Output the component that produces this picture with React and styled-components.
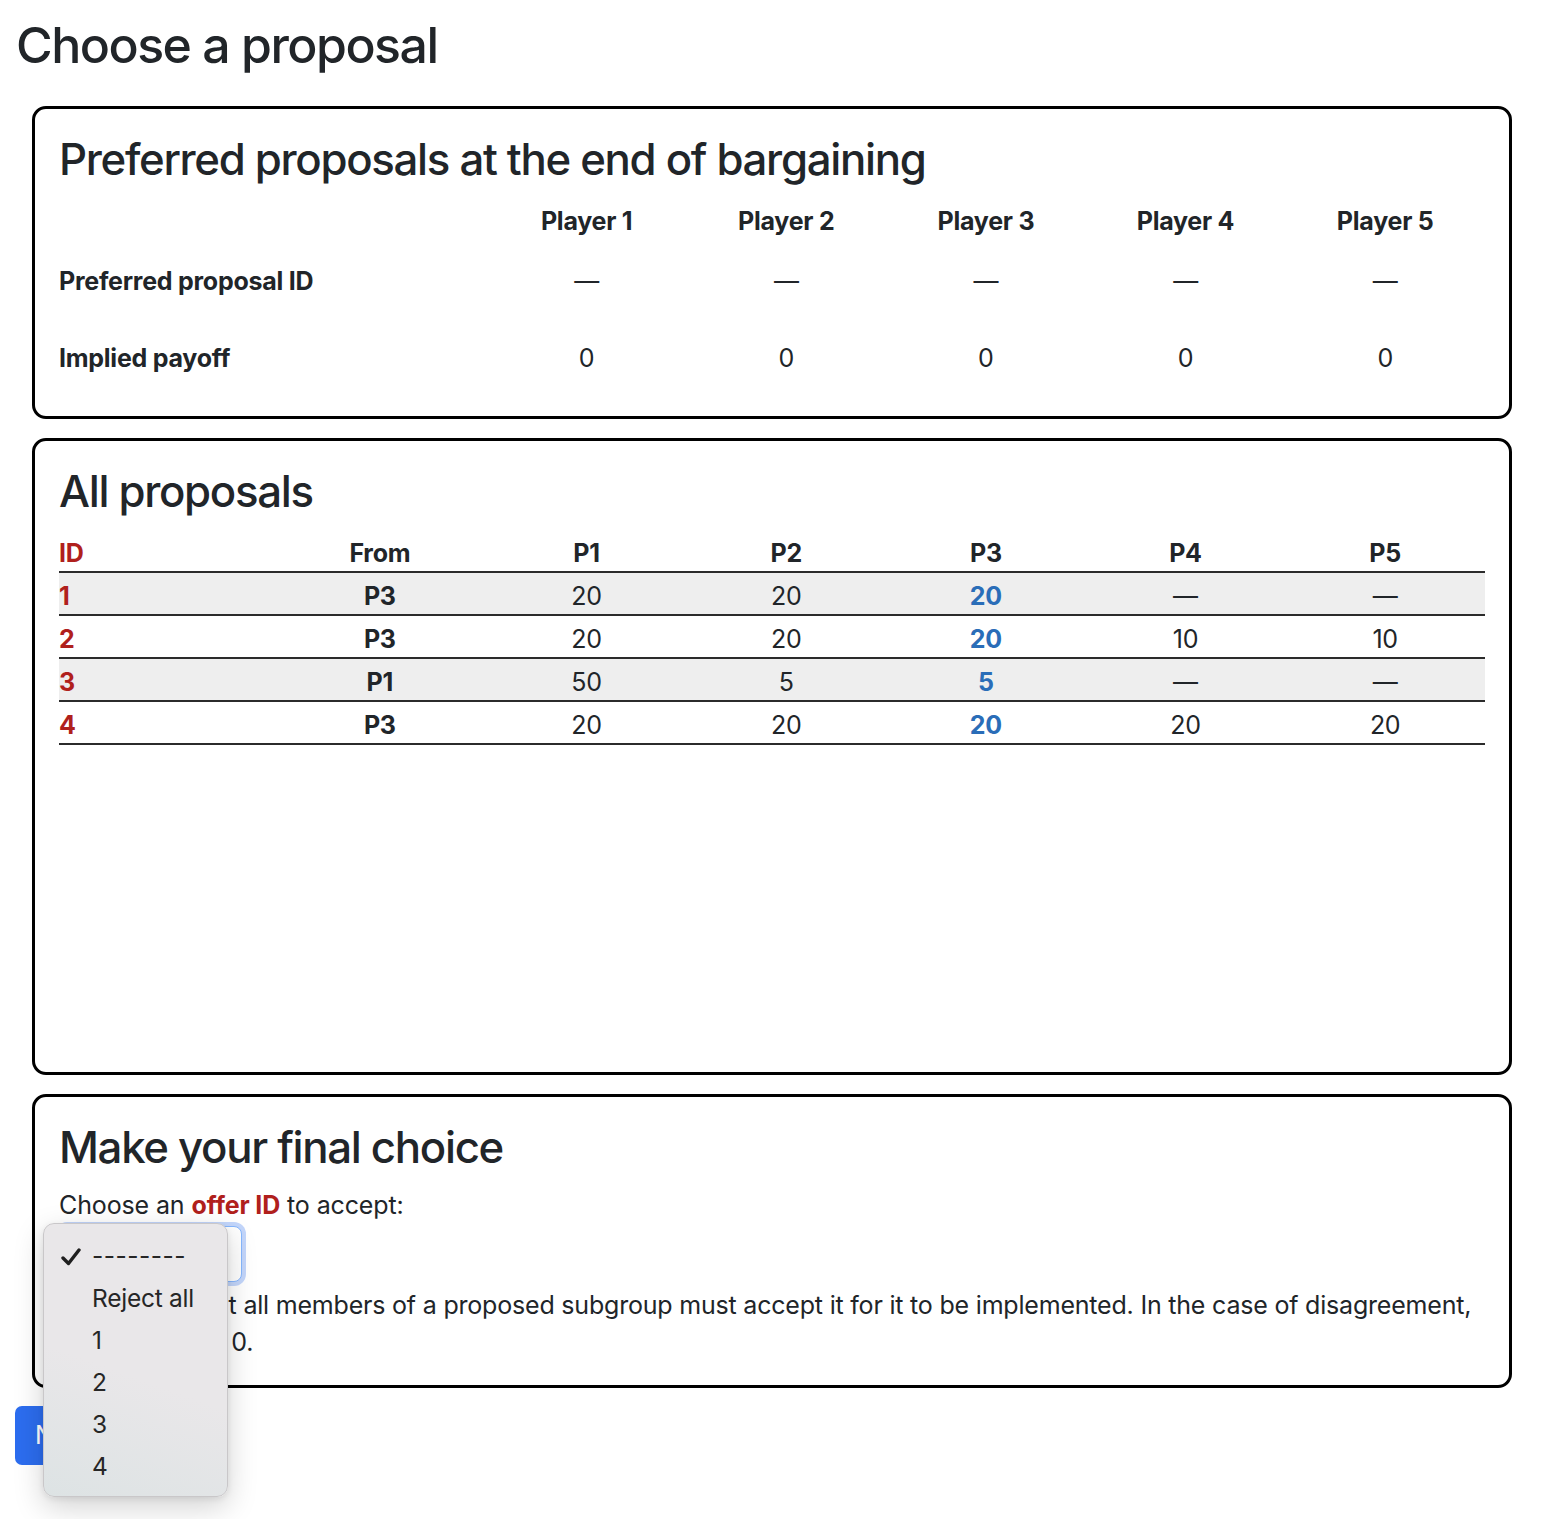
import React from "react";
import styled, { createGlobalStyle } from "styled-components";

const GlobalStyle = createGlobalStyle`
  html, body {
    margin: 0;
    padding: 0;
    background: #ffffff;
  }
  body {
    font-family: Inter, "Liberation Sans", Arial, sans-serif;
    color: #212529;
    font-size: 25px;
    line-height: 1.5;
  }
  * { box-sizing: border-box; }
`;

const Page = styled.div`
  position: relative;
  min-height: 1519px;
  padding: 15px 16px 30px 16px;
`;

const Title = styled.h1`
  margin: 0 0 31px 0;
  font-size: 50px;
  line-height: 60px;
  font-weight: 500;
  letter-spacing: -0.03em;
`;

const Cards = styled.div`
  display: flex;
  flex-direction: column;
  gap: 19px;
  margin: 0 37px 18px 16px;
`;

const Card = styled.section`
  border: 3px solid #000;
  border-radius: 14px;
  padding: 25px 24px ${(p) => (p.$pb ? p.$pb : 25)}px 24px;
  height: ${(p) => (p.$height ? `${p.$height}px` : "auto")};
`;

const CardTitle = styled.h2`
  margin: 0 0 12.5px 0;
  font-size: 43.75px;
  line-height: 52.5px;
  font-weight: 500;
  letter-spacing: -0.03em;
`;

const Table = styled.table`
  width: 100%;
  border-collapse: collapse;
  table-layout: fixed;
  font-size: 25px;
  line-height: 30px;
  letter-spacing: -0.01em;
`;

const Col = styled.col`
  width: ${(p) => p.$w};
`;

const HeadCell = styled.th`
  font-weight: 700;
  text-align: ${(p) => (p.$left ? "left" : "center")};
  color: ${(p) => (p.$red ? "#b0201c" : "#212529")};
  height: ${(p) => p.$h}px;
  padding: ${(p) => (p.$shift ? `${p.$shift}px 0 0` : "0")};
  vertical-align: middle;
  border-bottom: ${(p) => (p.$line ? "2px solid #2b2b2b" : "none")};
`;

const Row = styled.tr`
  background: ${(p) => (p.$striped ? "#eeeeee" : "transparent")};
  border-bottom: ${(p) => (p.$line ? "2px solid #2b2b2b" : "none")};
`;

const Cell = styled.td`
  height: ${(p) => p.$h}px;
  padding: ${(p) => (p.$shift ? `${p.$shift}px 0 0` : "0")};
  text-align: ${(p) => (p.$left ? "left" : "center")};
  vertical-align: middle;
  font-weight: ${(p) => (p.$bold ? 700 : 400)};
  color: ${(p) =>
    p.$tone === "red" ? "#b0201c" : p.$tone === "blue" ? "#2a6db8" : "#212529"};
`;

const Text = styled.p`
  margin: ${(p) => p.$m || "0"};
  font-size: 25px;
  line-height: 37.5px;
  letter-spacing: ${(p) => p.$ls || "-0.005em"};
`;

const Accent = styled.strong`
  color: #b0201c;
  font-weight: 700;
`;

const SelectWrap = styled.div`
  position: relative;
  width: 191px;
  height: 64px;
  margin: -3px 0 0 -4px;
`;

const SelectBox = styled.select`
  appearance: none;
  -webkit-appearance: none;
  display: block;
  width: 183px;
  height: 56px;
  margin: 4px;
  border: 1.5px solid #86b7fe;
  border-radius: 8px;
  background: #fff;
  box-shadow: 0 0 0 4px #c3d6fb;
  font-family: Inter, "Liberation Sans", Arial, sans-serif;
  font-size: 25px;
  color: #212529;
  padding: 0 18px;
  outline: none;
`;

const Menu = styled.div`
  position: absolute;
  left: -12px;
  top: -3px;
  width: 185px;
  height: 274px;
  padding: 12px 0 10px;
  border-radius: 11px;
  border: 1px solid #c9c7c9;
  background: linear-gradient(200deg, #e9e7e9 55%, #dde3e4 100%);
  box-shadow: 0 10px 30px rgba(0, 0, 0, 0.18), 0 2px 6px rgba(0, 0, 0, 0.08);
  z-index: 10;
  display: flex;
  flex-direction: column;
`;

const MenuItem = styled.div`
  position: relative;
  flex: 0 0 42px;
  height: 42px;
  display: flex;
  align-items: center;
  padding-left: 48px;
  font-size: 24.5px;
  color: #262626;
  letter-spacing: ${(p) => (p.$dash ? "0.02em" : "-0.01em")};
`;

const Check = styled.svg`
  position: absolute;
  left: 17px;
  top: 12px;
`;

const PrimaryButton = styled.button`
  margin-left: -1px;
  height: 59px;
  padding: 0 20px;
  border: none;
  border-radius: 7px;
  background: #2c6def;
  color: #fff;
  font-family: Inter, "Liberation Sans", Arial, sans-serif;
  font-size: 25px;
  cursor: pointer;
`;

const players = [1, 2, 3, 4, 5];

const proposals = [
  { id: 1, from: "P3", v: ["20", "20", "20", "—", "—"] },
  { id: 2, from: "P3", v: ["20", "20", "20", "10", "10"] },
  { id: 3, from: "P1", v: ["50", "5", "5", "—", "—"] },
  { id: 4, from: "P3", v: ["20", "20", "20", "20", "20"] },
];

export default function App() {
  return (
    <>
      <GlobalStyle />
      <Page>
        <Title>Choose a proposal</Title>
        <Cards>
          <Card $pb={21}>
            <CardTitle>Preferred proposals at the end of bargaining</CardTitle>
            <Table>
              <colgroup>
                <Col $w="30%" />
                {players.map((p) => (
                  <Col key={p} $w="14%" />
                ))}
              </colgroup>
              <thead>
                <tr>
                  <HeadCell $h={44} />
                  {players.map((p) => (
                    <HeadCell key={p} $h={44}>
                      Player {p}
                    </HeadCell>
                  ))}
                </tr>
              </thead>
              <tbody>
                <Row>
                  <Cell $h={76} $left $bold>
                    Preferred proposal ID
                  </Cell>
                  {players.map((p) => (
                    <Cell key={p} $h={76}>
                      —
                    </Cell>
                  ))}
                </Row>
                <Row>
                  <Cell $h={76} $shift={2} $left $bold>
                    Implied payoff
                  </Cell>
                  {players.map((p) => (
                    <Cell key={p} $h={76} $shift={2}>
                      0
                    </Cell>
                  ))}
                </Row>
              </tbody>
            </Table>
          </Card>

          <Card $height={637}>
            <CardTitle>All proposals</CardTitle>
            <Table>
              <colgroup>
                <Col $w="15%" />
                <Col $w="15%" />
                {players.map((p) => (
                  <Col key={p} $w="14%" />
                ))}
              </colgroup>
              <thead>
                <tr>
                  <HeadCell $h={41} $shift={3} $left $red $line>
                    ID
                  </HeadCell>
                  <HeadCell $h={41} $shift={3} $line>
                    From
                  </HeadCell>
                  {players.map((p) => (
                    <HeadCell key={p} $h={41} $shift={3} $line>
                      P{p}
                    </HeadCell>
                  ))}
                </tr>
              </thead>
              <tbody>
                {proposals.map((r, i) => (
                  <Row key={r.id} $striped={i % 2 === 0} $line>
                    <Cell $h={43} $shift={5} $left $bold $tone="red">
                      {r.id}
                    </Cell>
                    <Cell $h={43} $shift={5} $bold>
                      {r.from}
                    </Cell>
                    {r.v.map((v, j) => (
                      <Cell
                        key={j}
                        $h={43}
                        $shift={5}
                        $bold={j === 2}
                        $tone={j === 2 ? "blue" : undefined}
                      >
                        {v}
                      </Cell>
                    ))}
                  </Row>
                ))}
              </tbody>
            </Table>
          </Card>

          <Card $pb={23}>
            <CardTitle>Make your final choice</CardTitle>
            <Text>
              Choose an <Accent>offer ID</Accent> to accept:
            </Text>
            <SelectWrap>
              <SelectBox defaultValue="">
                <option value="">--------</option>
                <option value="reject">Reject all</option>
                <option value="1">1</option>
                <option value="2">2</option>
                <option value="3">3</option>
                <option value="4">4</option>
              </SelectBox>
              <Menu>
                <MenuItem $dash>
                  <Check width="20" height="18" viewBox="0 0 20 18">
                    <path
                      d="M2 10 L7.5 15.5 L18 2"
                      fill="none"
                      stroke="#1f1f1f"
                      strokeWidth="3.4"
                      strokeLinecap="round"
                      strokeLinejoin="round"
                    />
                  </Check>
                  --------
                </MenuItem>
                <MenuItem>Reject all</MenuItem>
                <MenuItem>1</MenuItem>
                <MenuItem>2</MenuItem>
                <MenuItem>3</MenuItem>
                <MenuItem>4</MenuItem>
              </Menu>
            </SelectWrap>
            <Text $m="-3px 0 0 0" $ls="-0.008em">
              Remember that all members of a proposed subgroup must accept it for
              it to be implemented. In the case of disagreement, everyone gets 0.
            </Text>
          </Card>
        </Cards>
        <PrimaryButton>Next</PrimaryButton>
      </Page>
    </>
  );
}
